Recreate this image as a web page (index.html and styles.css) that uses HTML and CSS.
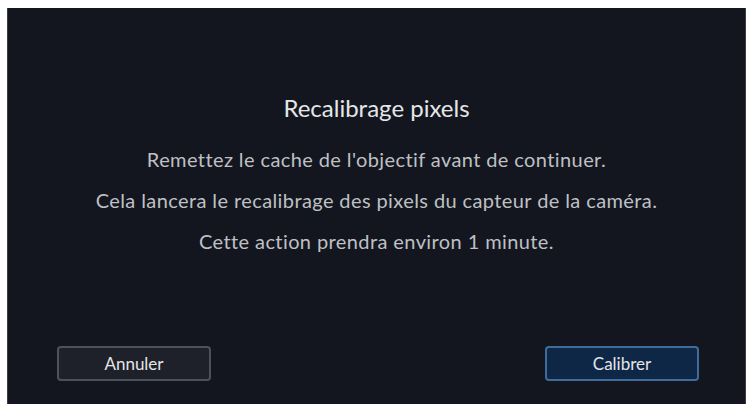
FILE: index.html
```html
<!DOCTYPE html>
<html lang="fr">
<head>
<meta charset="utf-8">
<link rel="stylesheet" href="styles.css">
</head>
<body>
<div class="screen">
  <div class="content">
    <h1 class="title">Recalibrage pixels</h1>
    <p class="line">Remettez le cache de l'objectif avant de continuer.</p>
    <p class="line">Cela lancera le recalibrage des pixels du capteur de la caméra.</p>
    <p class="line">Cette action prendra environ 1 minute.</p>
  </div>
  <div class="actions">
    <button class="btn btn-cancel">Annuler</button>
    <button class="btn btn-ok">Calibrer</button>
  </div>
</div>
</body>
</html>
```

FILE: styles.css
```css
html, body {
  margin: 0;
  padding: 0;
  background: #ffffff;
}
body {
  width: 751px;
  height: 406px;
  padding: 8px 5px 2px 7px;
  box-sizing: border-box;
  font-family: "Lato", "Liberation Sans", sans-serif;
}
.screen {
  height: 100%;
  background: #13161f;
  border-left: 1px solid #3a3d44;
  border-right: 1px solid #3a3d44;
  box-sizing: border-box;
  display: flex;
  flex-direction: column;
}
.content {
  flex: 1;
  display: flex;
  flex-direction: column;
  align-items: center;
  padding-top: 86px;
}
.title {
  margin: 0 0 25px 0;
  font-size: 24px;
  font-weight: 400;
  color: #e6e6e8;
  line-height: 28px;
}
.line {
  margin: 0 0 17px 0;
  font-size: 20px;
  letter-spacing: 0.4px;
  line-height: 24px;
  color: #bfc0c4;
}
.actions {
  display: flex;
  justify-content: space-between;
  padding: 0 46px 23px 49px;
}
.btn {
  width: 154px;
  height: 35px;
  border-radius: 4px;
  font-family: "Lato", "Liberation Sans", sans-serif;
  font-size: 17px;
  color: #e4e5e8;
  box-sizing: border-box;
}
.btn-cancel {
  background: #1e2129;
  border: 2px solid #4d5159;
}
.btn-ok {
  background: #0f2746;
  border: 2px solid #3f6c9c;
}
```
